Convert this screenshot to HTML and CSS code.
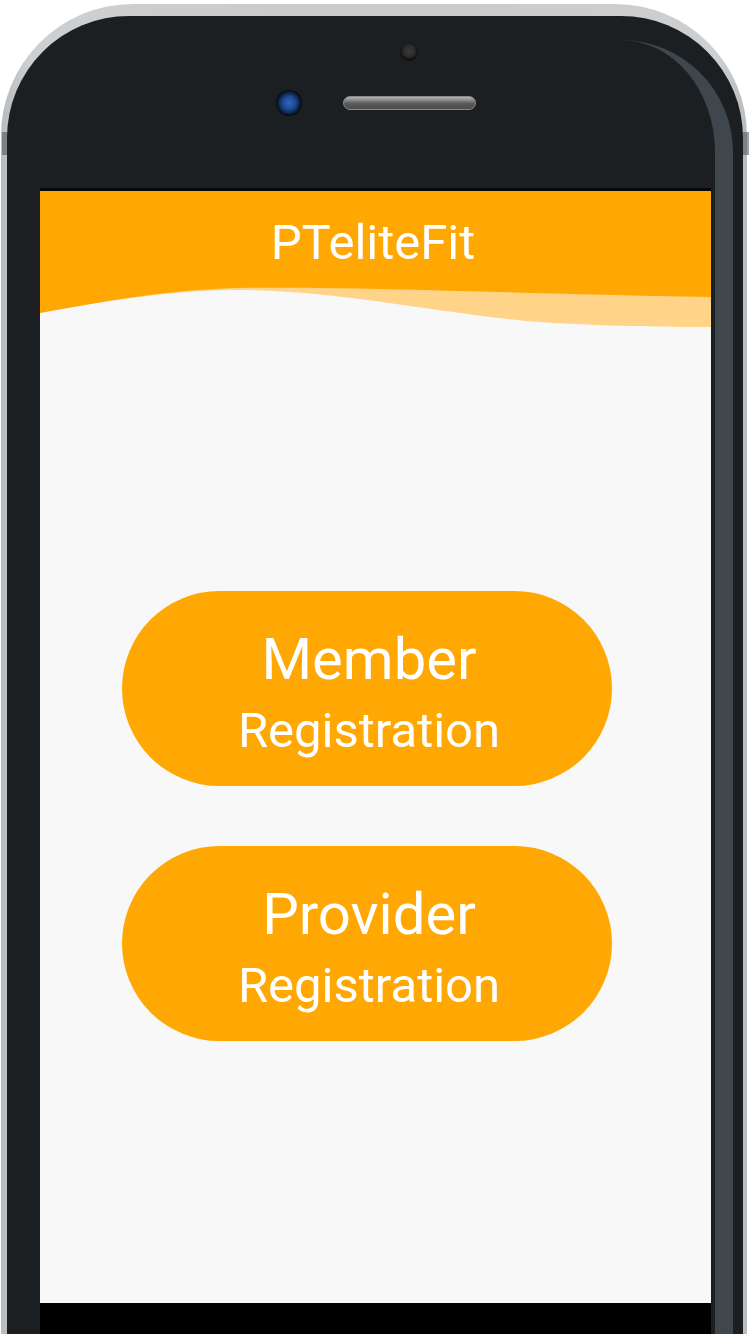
FILE: index.html
```html
<!DOCTYPE html>
<html lang="en">
<head>
<meta charset="utf-8">
<title>PTeliteFit</title>
<link rel="stylesheet" href="styles.css">
</head>
<body>
<div class="phone">
  <span class="side-btn side-left"></span>
  <span class="side-btn side-right"></span>
  <div class="body">
    <div class="bezel-top">
      <span class="sensor"></span>
      <div class="cam-row">
        <span class="camera"></span>
        <span class="speaker"></span>
      </div>
    </div>
    <div class="screen">
      <header class="header">
        <h1 class="title">PTeliteFit</h1>
      </header>
      <svg class="wave" viewBox="0 0 671 45" width="671" height="45" preserveAspectRatio="none" aria-hidden="true">
        <path d="M0,27 C80,12 140,4 200,4 C300,4 400,28 500,36 C580,41 640,41 671,41 L671,0 L0,0 Z" fill="#ffd388"/>
        <path d="M0,27 C80,12 140,3 200,2 C320,0 480,8 671,11 L671,0 L0,0 Z" fill="#ffa702"/>
      </svg>
      <main class="content">
        <button class="reg-btn" type="button">
          <span class="big">Member</span>
          <span class="small">Registration</span>
        </button>
        <button class="reg-btn" type="button">
          <span class="big">Provider</span>
          <span class="small">Registration</span>
        </button>
      </main>
    </div>
    <div class="nav-strip"></div>
  </div>
</div>
</body>
</html>
```

FILE: styles.css
```css
html, body {
  margin: 0;
  padding: 0;
}

body {
  width: 750px;
  height: 1334px;
  overflow: hidden;
  background: #ffffff;
  font-family: Roboto, "Noto Sans", "Liberation Sans", sans-serif;
}

.phone {
  position: relative;
  box-sizing: border-box;
  width: 746px;
  height: 1330px;
  margin: 4px 0 0 1px;
  padding: 12px 4px 0 6px;
  background: linear-gradient(90deg, #b9bbbd 0%, #cdcfd1 4%, #c8cacc 50%, #cdcfd1 96%, #b9bbbd 100%);
  border-radius: 132px 132px 0 0;
}

.side-btn {
  position: absolute;
  top: 128px;
  width: 12px;
  height: 23px;
  background: #4b5054;
  opacity: 0.55;
}

.side-left { left: 1px; }
.side-right { right: -2px; }

.body {
  position: relative;
  height: 100%;
  display: flex;
  flex-direction: column;
  background: #1b1f22;
  border-radius: 122px 122px 0 0;
  overflow: hidden;
}

.body::after {
  content: "";
  position: absolute;
  top: 24px;
  right: 10px;
  width: 150px;
  bottom: 0;
  box-sizing: border-box;
  border-right: 18px solid #3f464c;
  border-top-right-radius: 112px;
  pointer-events: none;
}

.bezel-top {
  flex: none;
  height: 172px;
  box-sizing: border-box;
  padding-top: 27px;
}

.sensor {
  display: block;
  width: 18px;
  height: 18px;
  margin-left: 393px;
  border-radius: 50%;
  background: radial-gradient(circle at 50% 45%, #3a3a3a 0%, #2a2a2a 45%, #0b0b0b 70%);
}

.cam-row {
  display: flex;
  align-items: center;
  height: 26px;
  margin-top: 29px;
  padding-left: 269px;
  gap: 41px;
}

.camera {
  width: 26px;
  height: 26px;
  border-radius: 50%;
  background: radial-gradient(circle at 50% 50%, #2f67c0 0%, #1d4a92 35%, #0c2142 58%, #050709 70%);
}

.speaker {
  width: 133px;
  height: 14px;
  box-sizing: border-box;
  border-radius: 7px;
  background: linear-gradient(180deg, #b3b3b3 0%, #8c8c8c 25%, #5a5a5a 55%, #4a4a4a 100%);
  border: 1px solid #8a8a8a;
}

.screen {
  position: relative;
  z-index: 1;
  flex: none;
  width: 671px;
  margin: 0 32px 0 33px;
  border-top: 3px solid #07070c;
  background: #f8f8f8;
  display: flex;
  flex-direction: column;
}

.header {
  height: 95px;
  box-sizing: border-box;
  padding-top: 27px;
  background: #ffa702;
  text-align: center;
}

.title {
  margin: 0;
  font-size: 49px;
  line-height: 49px;
  font-weight: 400;
  color: #ffffff;
  padding-right: 5px;
}

.wave {
  display: block;
  width: 671px;
  height: 45px;
}

.content {
  height: 972px;
  box-sizing: border-box;
  padding: 260px 0 0 82px;
  display: flex;
  flex-direction: column;
  align-items: flex-start;
  gap: 60px;
}

.reg-btn {
  width: 490px;
  height: 195px;
  box-sizing: border-box;
  border: none;
  border-radius: 98px;
  background: #ffa702;
  color: #ffffff;
  font-family: Roboto, "Noto Sans", "Liberation Sans", sans-serif;
  display: flex;
  flex-direction: column;
  align-items: center;
  justify-content: flex-start;
  padding: 39px 0 0 4px;
  cursor: pointer;
}

.big {
  display: block;
  font-size: 58px;
  line-height: 58px;
}

.small {
  display: block;
  margin-top: 18px;
  font-size: 49px;
  line-height: 49px;
}

.nav-strip {
  position: relative;
  z-index: 1;
  flex: 1;
  width: 671px;
  margin: 0 32px 0 33px;
  background: #000000;
}
```
